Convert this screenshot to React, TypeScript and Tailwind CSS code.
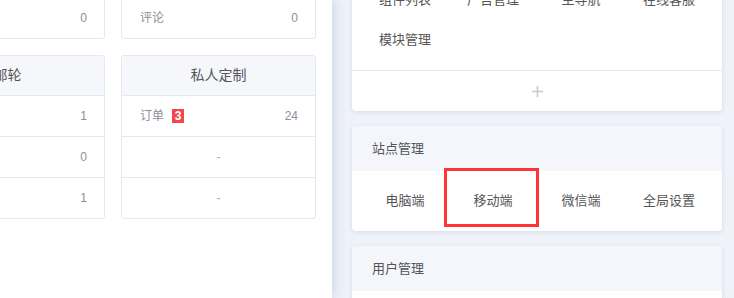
import { Plus } from 'lucide-react';

type Row = { label: string; value: string; badge?: string };

const font = { fontFamily: '"Liberation Sans", "Noto Sans CJK SC", sans-serif' };

function StatCard({ title, rows }: { title: string; rows: Row[] }) {
  return (
    <div className="w-[195px] shrink-0 rounded-[3px] border border-[#e3e8f2] bg-white">
      <div className="flex h-[39px] items-center justify-center bg-[#f5f7fb] text-[14px] text-[#555]">{title}</div>
      {rows.map((r, i) =>
        r.label ? (
          <div key={i} className="flex h-[41px] items-center justify-between border-t border-[#e3e8f2] pl-[18px] pr-[17px] text-[12px] text-[#8c909a]">
            <div className="flex items-center gap-[8px]">
              <span>{r.label}</span>
              {r.badge && (
                <span className="flex h-[14px] w-[12px] items-center justify-center bg-[#f5474a] text-[12px] font-bold leading-none text-white">{r.badge}</span>
              )}
            </div>
            <span>{r.value}</span>
          </div>
        ) : (
          <div key={i} className="flex h-[41px] items-center justify-center border-t border-[#e3e8f2] text-[12px] text-[#a5a9b2]">-</div>
        )
      )}
    </div>
  );
}

function MenuCard({ title, items, plus, active }: { title: string; items: string[]; plus?: boolean; active?: string }) {
  return (
    <div className="w-[370px] shrink-0 rounded-[4px] bg-white shadow-[0_1px_4px_rgba(180,190,215,0.45)]">
      <div className="flex h-[45px] items-center rounded-t-[4px] bg-[#f4f6fb] pl-[20px] text-[13px] text-[#555]">{title}</div>
      {items.length > 0 && (
        <div className={`grid grid-cols-4 px-[9px] py-[10px] ${plus ? 'border-b border-[#e3e8f3]' : ''}`}>
          {items.map((it) => (
            <div key={it} className="relative flex h-[40px] items-center justify-center text-[13px] text-[#555]">
              {it}
              {it === active && (
                <div className="pointer-events-none absolute -left-[5px] -right-[2px] -top-[13px] -bottom-[6px] border-[3px] border-[#ff3434]"></div>
              )}
            </div>
          ))}
        </div>
      )}
      {plus && (
        <div className="flex h-[40px] items-center justify-center text-[#c8cbd1]">
          <Plus className="h-[17px] w-[17px]" strokeWidth={2.4} />
        </div>
      )}
    </div>
  );
}

export default function App() {
  return (
    <div className="flex h-[298px] w-[734px] overflow-hidden bg-[#eff2f9]" style={font}>
      <div className="relative z-10 flex w-[332px] shrink-0 flex-col items-end gap-[16px] overflow-hidden bg-white pr-[16px] shadow-[3px_0_10px_rgba(205,212,234,0.9)]">
        <div className="-mt-[84px] flex shrink-0 gap-[16px]">
          <StatCard title="酒店" rows={[{ label: '订单', value: '2' }, { label: '评论', value: '0' }]} />
          <StatCard title="门票" rows={[{ label: '订单', value: '5' }, { label: '评论', value: '0' }]} />
        </div>
        <div className="flex shrink-0 gap-[16px]">
          <StatCard title="邮轮" rows={[{ label: '订单', value: '1' }, { label: '咨询', value: '0' }, { label: '评论', value: '1' }]} />
          <StatCard title="私人定制" rows={[{ label: '订单', value: '24', badge: '3' }, { label: '', value: '' }, { label: '', value: '' }]} />
        </div>
      </div>
      <div className="-mt-[75px] flex flex-1 flex-col gap-[15px] pl-[20px]">
        <MenuCard title="页面管理" items={['组件列表', '广告管理', '主导航', '在线客服', '模块管理']} plus />
        <MenuCard title="站点管理" items={['电脑端', '移动端', '微信端', '全局设置']} active="移动端" />
        <MenuCard title="用户管理" items={['会员列表', '会员等级', '积分设置', '消息通知']} />
      </div>
    </div>
  );
}
